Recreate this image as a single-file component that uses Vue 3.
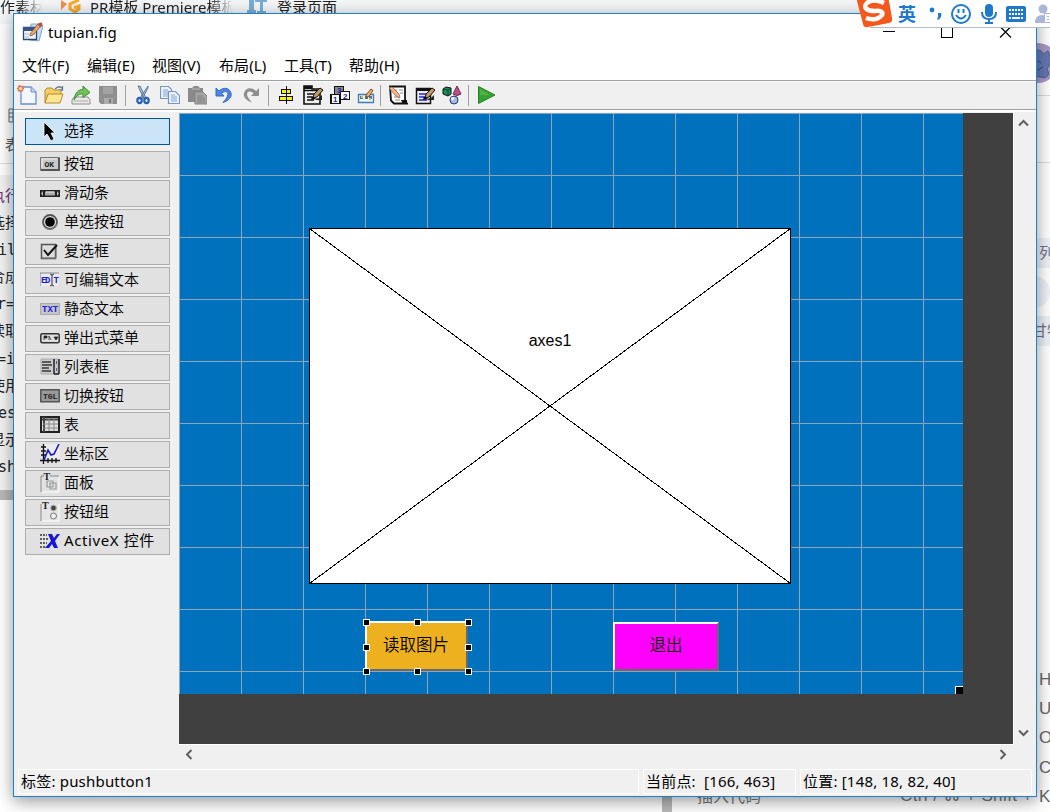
<script setup>
  import { ref } from 'vue';

  const menus = ['文件(F)', '编辑(E)', '视图(V)', '布局(L)', '工具(T)', '帮助(H)'];

  const selected = ref('select');

  const pencil = '<path d="M10 13l1-4 6-6 3 2-6 7z" fill="#c39a66" stroke="#111"/><path d="M8 15l1-4 4 3z" fill="#111"/><path d="M12 14l4-1 3-3v5h-6z" fill="#222"/>';

  const toolbar = [
    [
      { name: 'new', art: '<path d="M4 2h10l5 5v12H4z" fill="#f3f8ff" stroke="#6f8fc4" stroke-width="1.300"/><path d="M14 2v5h5" fill="#c3d6f2" stroke="#6f8fc4"/><path d="M3 0v7M0 3.500h7M1 1l5 5M6 1L1 6" stroke="#e0704a" stroke-width="1.500"/><circle cx="3.500" cy="3.500" r="1.600" fill="#ffe08a"/>' },
      { name: 'open', art: '<path d="M11 4q4-4 7-1M18.500 1v4h-4" fill="none" stroke="#5c7699" stroke-width="1.300"/><path d="M1 18V5l2-2h5l2 2h7v5" fill="#f3cf6b" stroke="#b98a2b"/><path d="M1 18l3-9h15l-3 9z" fill="#ffe694" stroke="#b98a2b"/>' },
      { name: 'import', art: '<path d="M3 12h14l2 3v4H1v-4z" fill="#e9e9e9" stroke="#8e8e8e"/><path d="M3 16h14" stroke="#aaa"/><path d="M3 15C4 7 8 4.500 12 4.500V1l7 6.500-7 5V9c-4 0-6 1-9 6z" fill="#71c356" stroke="#3d8d35"/>' },
      { name: 'save', art: '<path d="M1 1h18v18H3l-2-2z" fill="#8f8f8f"/><path d="M5 2h10v7H5z" fill="#a3a3a3"/><path d="M6 13h9v6H6z" fill="#ababab"/><path d="M11 14h2v4h-2z" fill="#777"/>' }
    ],
    [
      { name: 'cut', art: '<path d="M5 1l2 0 6 12-2 1zM15 1l0 2-6 11-2-1z" fill="#aebdd0" stroke="#52729b" stroke-width=".9"/><g fill="none" stroke="#2460b4" stroke-width="2.200"><ellipse cx="6.500" cy="15.500" rx="2.200" ry="2.700"/><ellipse cx="13.500" cy="15.500" rx="2.200" ry="2.700"/></g>' },
      { name: 'copy', art: '<g fill="#edf4ff" stroke="#7695c7" stroke-width="1.200"><path d="M.5 1.500h8l3 3v9h-11z"/><path d="M8.500 6.500h7l4 4v8h-11z"/></g><path d="M3 5h5M3 7h5M3 9h5M3 11h5M11 10h4M11 12h6M11 14h6M11 16h6" stroke="#7ea2d4"/>' },
      { name: 'paste', art: '<path d="M1 3h4l2-2h4l2 2h3v14H1z" fill="#8a8a8a"/><path d="M5 4h8" stroke="#bbb"/><path d="M8 7h8l4 4v8H8z" fill="#a6a6a6" stroke="#858585"/><path d="M10 11h6M10 13h8M10 15h8M10 17h8" stroke="#808080"/>' },
      { name: 'undo', art: '<path d="M2 3v8h8L7.500 8.200C12 5 15 7 13.500 11c-.8 2.500-2.500 4-4.500 6.500C15 15.500 18 12 17 8 15.500 3 10 1.500 4.800 6z" fill="#4c86e2" stroke="#3468c8" stroke-width="1"/>' },
      { name: 'redo', art: '<path d="M18 3v8h-8l2.500-2.800C8 5 5 7 6.500 11c.8 2.500 2.500 4 4.500 6.500C5 15.500 2 12 3 8 4.500 3 10 1.500 15.200 6z" fill="#8f8f8f"/>' }
    ],
    [
      { name: 'align', art: '<g shape-rendering="crispEdges"><path d="M10 1h1v18h-1z" fill="#111"/><path d="M5.500 4.500h9v4h-9zM3.500 11.500h13v4h-13z" fill="#ffef00" stroke="#111" stroke-width="1.200"/><path d="M10 4v5h1V4zM10 11v5h1v-5z" fill="#111"/></g>' },
      { name: 'menu-editor', art: '<path d="M1 1h8v3h8v15H1z" fill="#eee" stroke="#111" stroke-width="1.600"/><path d="M1 1h8v3H1z" fill="#111"/><path d="M1 5.500h16M4 9h7M4 12h5M4 15h7" stroke="#111" stroke-width="1.700"/>' + pencil },
      { name: 'tab-order', art: '<g stroke="#111" stroke-width="1.400" shape-rendering="crispEdges"><path d="M4.500 1.500h9v9h-9z" fill="#888"/><path d="M10.500 6.500h9v8h-9z" fill="#fff"/><path d="M1 9.500h9v9H1z" fill="#fff"/></g><g font-family="Liberation Sans" font-size="8" font-weight="700" fill="#1919ad"><text x="3" y="17">1</text><text x="13" y="13.500">2</text><text x="7" y="8">3</text></g>' },
      { name: 'toolbar-editor', art: '<path d="M1.500 9.500h15v8h-15z" fill="#e8f3fc" stroke="#447bb4" stroke-width="1.300"/><path d="M3 11h3v3H3zM8 11h3v3H8zM12 11h3v3h-3z" fill="#477b9e"/><path d="M4 11h2v2H4zM12 13h2v2h-2z" fill="#e9bf32"/><path d="M9 10l5-6 2 1.500-4 6-3 .7z" fill="#f4ad61" stroke="#754026" stroke-width=".9"/>' }
    ],
    [
      { name: 'm-file', art: '<path d="M2 1.500h15v15l2 2H6l-3-3z" fill="#fff" stroke="#111" stroke-width="1.800"/><path d="M13 15h6v4h-4z" fill="#111"/><path d="M6 5h3M11 5h4M12 8h3M6 12h5M7 15h5" stroke="#888"/><path d="M1 3l3-1 7 7 1 4-4-2z" fill="#efb98b" stroke="#a0603f" stroke-width=".8"/>' },
      { name: 'inspector', art: '<path d="M1.500 3.500h14v15h-14z" fill="#eee" stroke="#111" stroke-width="1.500"/><path d="M1 3h15v3H1z" fill="#111"/><path d="M4 9h7M4 12h5M4 15h8" stroke="#2323ed" stroke-width="1.600"/>' + pencil },
      { name: 'browser', art: '<path d="M1 4l3-2 5 1v6l-3 2-5-2z" fill="#15945a" stroke="#111"/><path d="M1 4l5 1 3-2M6 5v6" stroke="#063f22" fill="none"/><path d="M15 1l4 8q-4 3-8 0z" fill="#c04d87" stroke="#683050"/><circle cx="12" cy="15" r="4" fill="#a8b9ec" stroke="#273768"/><circle cx="10.500" cy="13.500" r="1.500" fill="#fff"/>' }
    ],
    [
      { name: 'run', art: '<path d="M2.500 1.500v17L19 10z" fill="#34a331" stroke="#238425"/><path d="M4 4v6h10z" fill="#65bd59" opacity=".6"/>' }
    ]
  ];

  const palette = [
    { id: 'select', label: '选择', art: '<path d="M4 1l11 11h-4l3 6-3 2-4-7-3 3z" fill="#000" stroke="#fff" stroke-width=".8"/>' },
    { id: 'push', label: '按钮', art: '<path d="M.5 3.500h19v13H.5z" fill="#c9c9c9" stroke="#777"/><path d="M1 16h18V4" fill="none" stroke="#555" stroke-width="2"/><path d="M2 14V5h15" fill="none" stroke="#eee"/><text x="4.500" y="12.800" class="tiny" font-size="8">OK</text>' },
    { id: 'slider', label: '滑动条', art: '<path d="M0 7h20v7H0z" fill="#222"/><path d="M5 8.500h10v4H5z" fill="#aaa"/><path d="M6 9h8" stroke="#eee"/><path d="M3 8v5L1 10.500zM17 8v5l2-2.500z" fill="#bbb"/>' },
    { id: 'radio', label: '单选按钮', art: '<circle cx="10" cy="10" r="7" fill="#ddd" stroke="#555" stroke-width="1.800"/><circle cx="10" cy="10" r="4.800"/><path d="M5 16q7 4 12-4" fill="none" stroke="#888"/>' },
    { id: 'check', label: '复选框', art: '<path d="M1.500 3.500h14v14h-14z" fill="#ddd" stroke="#555" stroke-width="1.500"/><path d="M2 17h14V5" fill="none" stroke="#777"/><path d="M4 9l4 5 9-10" fill="none" stroke="#111" stroke-width="2"/>' },
    { id: 'edit', label: '可编辑文本', art: '<path d="M1 3h18v13H1z" fill="#eaeaea"/><path d="M0 16V3h19" fill="none" stroke="#888"/><text x="1" y="13" class="tiny tiny-blue" font-size="9" textLength="9.500">ED</text><text x="13.500" y="13" class="tiny tiny-blue" font-size="9">T</text><path d="M10 4l2 1 2-1M12 5v10M10 16l2-1 2 1" fill="none" stroke="#333"/>' },
    { id: 'text', label: '静态文本', art: '<path d="M.5 4.500h19v11H.5z" fill="#c5c5c5" stroke="#aaa"/><text x="2" y="13" class="tiny tiny-blue" font-size="9">TXT</text>' },
    { id: 'popup', label: '弹出式菜单', art: '<rect x=".8" y="5.800" width="18.400" height="9" rx="1.500" fill="#ddd" stroke="#333" stroke-width="1.500"/><path d="M4 12V8h3v2H4M9 8v4M9 8l2 4M14 9h4l-2 3z" fill="#111" stroke="#333" stroke-width=".8"/>' },
    { id: 'list', label: '列表框', art: '<path d="M1 2h17v15H1z" fill="#ccc" stroke="#aaa"/><path d="M2 5h9M2 8h10M2 11h7M2 14h9" stroke="#333" stroke-width="1.600"/><path d="M14 2v15M19 2v15M14 17h5" stroke="#222" stroke-width="1.500"/><path d="M16.500 4v10" stroke="#5656bd" stroke-dasharray="3 4"/>' },
    { id: 'toggle', label: '切换按钮', art: '<path d="M.8 3.800h18.400v12H.8z" fill="#999" stroke="#555" stroke-width="1.500"/><text x="3" y="12.800" class="tiny" font-size="8">TGL</text>' },
    { id: 'table', label: '表', art: '<path d="M1 2h18v15H1z" fill="#ddd" stroke="#222" stroke-width="2"/><path d="M2 4.500h16M4 2v15" stroke="#444" stroke-width="2"/><path d="M9 3v13M14 3v13M3 9h15M3 13h15" stroke="#888"/>' },
    { id: 'axes', label: '坐标区', art: '<path d="M4 0h16v16H4z" fill="#ececec"/><path d="M3.500 0v20M0 16.500h20M1 3h5M1 7h5M1 11h5M8 14v5M12 14v5M16 14v5" stroke="#111" stroke-width="1.300"/><path d="M4 16L8 6l3 5 3-1 5-10" fill="none" stroke="#1717d0" stroke-width="1.600"/>' },
    { id: 'panel', label: '面板', art: '<path d="M1 3h18v16H1z" fill="#e2e2e2"/><path d="M1 19V3h3M10 3h9" fill="none" stroke="#888"/><path d="M19 4v15H2" fill="none" stroke="#fff"/><path d="M7 8h6v6H7zM10 10h6v6h-6z" fill="none" stroke="#999" stroke-width="1.200"/><text x="3.500" y="7" class="tiny tiny-serif" font-size="10">T</text>' },
    { id: 'group', label: '按钮组', art: '<path d="M1 2h18v17H1z" fill="#e4e4e4"/><path d="M1 19V2" stroke="#888"/><path d="M19 2v17H2" fill="none" stroke="#fff"/><circle cx="13.500" cy="6" r="2.800" fill="#444" stroke="#aaa"/><circle cx="13.500" cy="14" r="3" fill="#eee" stroke="#777"/><text x="2" y="7" class="tiny tiny-serif" font-size="10">T</text>' },
    { id: 'activex', label: 'ActiveX 控件', art: '<path d="M0 4h7M0 8h8M0 12h7M0 16h6" stroke="#333" stroke-width="1.400" stroke-dasharray="2 1"/><path d="M8 3h4l2 4 3-4h3l-5 7 3 7h-4l-2-4-3 4H5l6-7z" fill="#1515d8"/>' }
  ];

  const codeLines = [
    { text: '执行', shift: -10, color: '#6b2a78' },
    { text: '选择', shift: -10 },
    { text: 'il', shift: -2 },
    { text: '合成', shift: -10, color: '#333' },
    { text: 'r=', shift: -3 },
    { text: '读取', shift: -10 },
    { text: '=i', shift: -3 },
    { text: '使用', shift: -10 },
    { text: 'es', shift: -2 },
    { text: '显示', shift: -10 },
    { text: 'sh', shift: -2 }
  ];

  const shortcuts = ['H', 'U', 'O', 'C', 'K'];

  const handles = ['nw', 'n', 'ne', 'w', 'e', 'sw', 's', 'se'];
</script>

<template>
  <div class="desktop">
    <div class="bookmarks">
      <span class="bookmarks__item bookmarks__item--first fade">作素材</span>
      <svg class="bookmarks__logo" width="20" height="15" viewBox="0 0 20 15"><path d="M0 0l6 4-6 6z" fill="#f68d47" /><path d="M18 0L9 4v5l5 3 4-3V6l-5 2" fill="none" stroke="#f7a928" stroke-width="3" /></svg>
      <span class="bookmarks__item bookmarks__item--pr fade">PR模板 Premiere模板</span>
      <svg class="bookmarks__it" width="21" height="14" viewBox="0 0 21 14"><path d="M2 0v10H0v3h9v-3H7V0M8 0v2h5v9h-3v2h9v-2h-3V2h4V0" fill="#79aed4" /></svg>
      <span class="bookmarks__item">登录页面</span>
    </div>

    <div class="editor-edge">
      <div class="editor-edge__top">
        <svg width="14" height="15" viewBox="0 0 14 15"><path d="M9 1h12v13H9zM9 5h8M9 9h8M13 1v13" fill="none" stroke="#666" /></svg>
        <span>表</span>
      </div>
      <div class="editor-edge__code">
        <span v-for="line in codeLines" :key="line.text" :style="{ marginLeft: line.shift + 'px', color: line.color }">{{ line.text }}</span>
      </div>
      <div class="editor-edge__bar"></div>
    </div>

    <div class="page-edge">
      <div class="page-edge__avatar">
        <svg width="30" height="40" viewBox="0 0 30 40"><circle cx="2" cy="20" r="20" fill="#aa9bc7" /><path d="M-2 9q6-5 9 2l5-3q6 10-1 18 4 6-2 9l-10-2z" fill="#6578b4" stroke="#4a5588" stroke-width=".8" /><path d="M2 18l3 2M7 24l-5 3" stroke="#3c4575" /></svg>
      </div>
      <div class="page-edge__row"></div>
      <div class="page-edge__tags">
        <span>列表</span>
        <i></i>
        <span class="page-edge__gantt">甘特</span>
      </div>
      <div class="page-edge__keys">
        <span v-for="key in shortcuts" :key="key">{{ key }}</span>
      </div>
    </div>

    <div class="page-foot">
      <div class="page-foot__bar"></div>
      <span class="page-foot__label">插入代码</span>
      <span class="page-foot__keys">Ctrl / ⌘ + Shift +</span>
    </div>

    <div class="window">
      <div class="title">
        <svg width="22" height="22" viewBox="0 0 22 22">
          <path d="M9 2l10 0 2 2-4 15-9-1z" fill="#c9ddf2" stroke="#86a7cb" />
          <path d="M1.500 5.500h13v12h-13z" fill="#f1f5fb" stroke="#27466f" stroke-width="1.300" />
          <path d="M1 5h14v4H1z" fill="#38547e" />
          <path d="M3 12h4M3 15h4M9 12h4" stroke="#b9c9df" stroke-width="1.500" />
          <path d="M8 12l7-9 3-1 1 2-8 9-3 1z" fill="#e5a76a" stroke="#7f4b31" stroke-width=".7" />
          <path d="M17 1l3-.5.5 3-2 2-3-3z" fill="#b84e3c" />
        </svg>
        <span class="title__text">tupian.fig</span>
        <svg class="title__controls" width="130" height="14" viewBox="0 0 130 14" fill="none" stroke="#000">
          <path d="M0 5.500h12M58.500 0.500h11v11h-11z" shape-rendering="crispEdges" />
          <path d="M117 .5l11 11M128 .5l-11 11" stroke-width="1.200" />
        </svg>
      </div>

      <div class="menu">
        <span v-for="item in menus" :key="item">{{ item }}</span>
      </div>

      <div class="toolbar">
        <div v-for="(group, i) in toolbar" :key="i" class="toolbar__group">
          <div v-for="tool in group" :key="tool.name" class="toolbar__tool">
            <svg width="20" height="20" viewBox="0 0 20 20" fill="none" v-html="tool.art"></svg>
          </div>
        </div>
      </div>

      <div class="body">
        <div class="palette">
          <div
            v-for="item in palette"
            :key="item.id"
            class="palette__item"
            :class="{ 'palette__item--selected': selected === item.id, 'palette__item--wide': item.id === 'activex' }"
            @click="selected = item.id"
          >
            <svg width="20" height="20" viewBox="0 0 20 20" v-html="item.art"></svg>
            <span>{{ item.label }}</span>
          </div>
        </div>

        <div class="view">
          <div class="view__main">
            <div class="stage">
              <div class="figure">
                <div class="axes">
                  <svg width="482" height="356" viewBox="0 0 482 356" shape-rendering="crispEdges">
                    <path d="M.5.5h481v355H.5zM.5.5l481 355M481.500.5L.5 355.500" fill="#fff" stroke="#000" />
                  </svg>
                  <span>axes1</span>
                </div>
                <div class="control control--read">
                  读取图片
                  <i v-for="h in handles" :key="h" class="handle" :class="'handle--' + h"></i>
                </div>
                <div class="control control--exit">退出</div>
                <div class="figure__grip"></div>
              </div>
            </div>
            <div class="scroll scroll--y">
              <svg width="11" height="8" viewBox="0 0 11 8"><path d="M1 6.500l4.500-4.500L10 6.500" /></svg>
              <svg width="11" height="8" viewBox="0 0 11 8"><path d="M1 1.500L5.500 6 10 1.500" /></svg>
            </div>
          </div>
          <div class="scroll scroll--x">
            <svg width="8" height="11" viewBox="0 0 8 11"><path d="M6.500 1L2 5.500 6.500 10" /></svg>
            <svg width="8" height="11" viewBox="0 0 8 11"><path d="M1.500 1L6 5.500 1.500 10" /></svg>
          </div>
        </div>
      </div>

      <div class="status">
        <div class="status__cell status__cell--tag">标签: pushbutton1</div>
        <div class="status__cell status__cell--point">当前点:&nbsp; [166, 463]</div>
        <div class="status__cell status__cell--position">位置: [148, 18, 82, 40]</div>
      </div>
    </div>

    <div class="ime">
      <svg class="ime__logo" width="38" height="30" viewBox="0 0 38 30">
        <path d="M1 2Q1-2 5-2h23q4 0 5 4l3 17q1 4-3 5L12 28q-4 1-5-3z" fill="#f4581c" />
        <path d="M28 4Q17-1 11 4c-5 5 1 8 8 8 7-1 9 2 6 5-3 4-10 4-15 2" fill="none" stroke="#fff" stroke-width="4.500" />
      </svg>
      <span class="ime__lang">英</span>
      <svg class="ime__punct" width="14" height="16" viewBox="0 0 14 16"><circle cx="3" cy="4" r="2.400" fill="#1f78ca" /><path d="M9 7h3q1.500 4-3 7l-1-1q2-2 1-4z" fill="#1f78ca" /></svg>
      <svg class="ime__smile" width="20" height="20" viewBox="0 0 20 20" fill="none" stroke="#1f78ca" stroke-width="2"><circle cx="10" cy="10" r="9" /><path d="M7.500 5v4M12.500 5v4M5 11q5 7 10 0" /></svg>
      <svg class="ime__mic" width="16" height="20" viewBox="0 0 16 20" fill="none" stroke="#1f78ca" stroke-width="2"><rect x="5" y="1" width="6" height="11" rx="3" fill="#1f78ca" /><path d="M1 8q0 7 7 7t7-7M8 15v4M4 19h8" /></svg>
      <svg class="ime__keyboard" width="20" height="16" viewBox="0 0 20 16"><rect width="20" height="16" rx="2" fill="#1f78ca" /><path d="M3 4h14M3 8h14" stroke="#fff" stroke-width="2" stroke-dasharray="2 1" /><path d="M3 12h2M6 12h8M15 12h2" stroke="#fff" stroke-width="2" /></svg>
      <svg class="ime__user" width="18" height="20" viewBox="0 0 18 20"><circle cx="8" cy="5" r="4.500" fill="#aab8d5" /><path d="M0 19q0-8 7-8 3 0 4 2v6z" fill="#aab8d5" /><path d="M9.500 9.500h10v9h-10z" fill="#fff" stroke="#aab8d5" /><path d="M13 12v1M13 15v1" stroke="#8fa0c0" stroke-width="1.500" /></svg>
    </div>
  </div>
</template>

<style>
  body {
    margin: 0;
    overflow: hidden;
  }

  .tiny {
    font-family: "Liberation Mono", monospace;
    font-weight: 700;
    fill: #222;
  }

  .tiny-blue {
    fill: #2020df;
  }

  .tiny-serif {
    font-family: "Liberation Serif", serif;
  }
</style>

<style scoped>
  .desktop {
    position: relative;
    width: 1050px;
    height: 812px;
    font-family: "Noto Sans", "Noto Sans CJK SC", sans-serif;
    font-size: 15px;
    color: #000;
    background: #fff;
    overflow: hidden;
  }

  .desktop * {
    box-sizing: border-box;
  }

  svg {
    display: block;
    flex-shrink: 0;
  }

  .bookmarks {
    display: flex;
    align-items: flex-start;
    height: 24px;
    white-space: nowrap;
    line-height: 14px;
    color: #222;
    background: #f5f6f7;
  }

  .bookmarks__item--first {
    width: 43px;
    overflow: hidden;
  }

  .bookmarks__logo {
    margin: 0 9px 0 18px;
  }

  .bookmarks__item--pr {
    width: 143px;
    overflow: hidden;
  }

  .bookmarks__it {
    margin: 0 9px 0 14px;
  }

  .fade {
    mask-image: linear-gradient(to left, transparent, #000 24px);
  }

  .editor-edge {
    position: absolute;
    top: 24px;
    left: 0;
    display: flex;
    flex-direction: column;
    width: 30px;
    height: 788px;
    overflow: hidden;
  }

  .editor-edge__top {
    display: flex;
    flex-direction: column;
    gap: 10px;
    height: 140px;
    padding-top: 84px;
    border-bottom: 1px solid #ddd;
    color: #555;
  }

  .editor-edge__top span {
    padding-left: 5px;
  }

  .editor-edge__code {
    display: flex;
    flex-direction: column;
    height: 326px;
    padding-top: 19px;
    font-family: "DejaVu Sans Mono", "Noto Sans CJK SC", monospace;
    line-height: 27.1px;
    white-space: nowrap;
    color: #222;
    background: linear-gradient(#fff 11px, #f3f3f3 11px);
  }

  .editor-edge__bar {
    height: 10px;
    background: #b9b9b9;
  }

  .page-edge {
    position: absolute;
    top: 24px;
    right: 0;
    display: flex;
    flex-direction: column;
    width: 14px;
    height: 788px;
    overflow: hidden;
    color: #666;
    background: #fff;
  }

  .page-edge__avatar {
    height: 72px;
    padding-top: 19px;
    border-bottom: 1px solid #ddd;
  }

  .page-edge__row {
    height: 67px;
    border-bottom: 1px solid #ddd;
  }

  .page-edge__tags {
    display: flex;
    flex-direction: column;
    gap: 8px;
    height: 502px;
    padding-top: 75px;
    white-space: nowrap;
  }

  .page-edge__tags span {
    height: 30px;
    padding-left: 3px;
    line-height: 28px;
    color: #70718b;
    background: #edf1f8;
  }

  .page-edge__tags .page-edge__gantt {
    padding-left: 0;
    text-indent: -4px;
  }

  .page-edge__tags i {
    flex-shrink: 0;
    width: 32px;
    height: 32px;
    margin-left: -18px;
    border-radius: 50%;
    background: #edf1f8;
  }

  .page-edge__keys {
    display: flex;
    flex-direction: column;
    padding-left: 3px;
    font-family: "Liberation Sans", sans-serif;
    font-size: 17px;
    line-height: 29.2px;
  }

  .page-foot {
    position: absolute;
    top: 784px;
    left: 662px;
    display: flex;
    width: 388px;
    height: 28px;
    line-height: 24px;
    color: #777;
  }

  .page-foot__bar {
    width: 10px;
    background: #b9b9b9;
  }

  .page-foot__label {
    width: 203px;
    margin-left: 25px;
    font-size: 16px;
  }

  .page-foot__keys {
    font-family: "Liberation Sans", "DejaVu Sans", sans-serif;
    font-size: 17px;
    letter-spacing: 0.4px;
    white-space: nowrap;
  }

  .window {
    position: absolute;
    top: 13px;
    left: 13px;
    display: flex;
    flex-direction: column;
    width: 1024px;
    height: 784px;
    border: 1px solid #1f80cc;
    background: #f0f0f0;
    box-shadow: 0 4px 16px rgba(0, 0, 0, 0.42);
  }

  .title {
    display: flex;
    align-items: center;
    height: 37px;
    padding-left: 8px;
    background: #fff;
  }

  .title__text {
    margin-left: 4px;
    padding-bottom: 2px;
    letter-spacing: 0.1px;
  }

  .title__controls {
    margin: 0 23px 0 auto;
  }

  .menu {
    display: flex;
    gap: 17px;
    height: 30px;
    padding-left: 8px;
    line-height: 29px;
    letter-spacing: 0.1px;
    white-space: nowrap;
    background: #fff;
    border-bottom: 1px solid #a0a0a0;
  }

  .menu span {
    flex: 0 0 48px;
  }

  .menu span:nth-child(3) {
    flex-basis: 50px;
  }

  .toolbar {
    display: flex;
    height: 29px;
    border-top: 1px solid #fff;
    border-bottom: 1px solid #a0a0a0;
  }

  .toolbar__group {
    display: flex;
    align-items: center;
    padding-right: 3px;
  }

  .toolbar__group + .toolbar__group {
    position: relative;
    padding-left: 4px;
  }

  .toolbar__group + .toolbar__group::before {
    content: "";
    position: absolute;
    top: 3px;
    bottom: 3px;
    left: 0;
    border-left: 1px solid #a0a0a0;
  }

  .toolbar__group:nth-child(2) {
    padding-right: 4px;
  }

  .toolbar__group:nth-child(3) {
    padding-right: 0;
  }

  .toolbar__tool {
    display: flex;
    justify-content: center;
    width: 27px;
    padding-bottom: 2px;
  }

  .toolbar__group:first-child .toolbar__tool {
    padding-right: 2px;
  }

  .body {
    display: flex;
    flex: 1;
    border-top: 2px solid #fff;
  }

  .palette {
    display: flex;
    flex-direction: column;
    gap: 2px;
    width: 165px;
    padding: 6px 9px 0 11px;
    font-weight: 350;
  }

  .palette__item {
    display: flex;
    align-items: center;
    gap: 4px;
    height: 27px;
    padding: 0 0 2px 14px;
    line-height: 23px;
    white-space: nowrap;
    border: 1px solid #adadad;
    background: #e1e1e1;
  }

  .palette__item--selected {
    margin-bottom: 4px;
    border-color: #005499;
    background: #cce4f7;
  }

  .palette__item--wide {
    font-weight: 400;
    letter-spacing: 0.6px;
  }

  .view {
    display: flex;
    flex-direction: column;
    width: 857px;
    padding-top: 1px;
  }

  .view__main {
    display: flex;
    height: 631px;
  }

  .stage {
    width: 834px;
    background: #404040;
  }

  .figure {
    position: relative;
    width: 784px;
    height: 581px;
    background-color: #0072bd;
    background-image: linear-gradient(to right, #8da5b8 1px, transparent 1px), linear-gradient(#8da5b8 1px, transparent 1px);
    background-size: 62px 62px;
  }

  .axes {
    position: absolute;
    top: 115px;
    left: 130px;
  }

  .axes span {
    position: absolute;
    top: 104px;
    left: 0;
    width: 482px;
    font-family: "Liberation Sans", sans-serif;
    font-size: 16px;
    line-height: 18px;
    text-align: center;
  }

  .control {
    position: absolute;
    font-size: 16.5px;
    font-weight: 350;
    line-height: 43px;
    text-align: center;
    border-style: solid;
    border-width: 2px;
    border-color: #fff #696969 #696969 #fff;
  }

  .control--read {
    top: 508px;
    left: 186px;
    width: 103px;
    height: 50px;
    padding-right: 1px;
    background: #edb120;
  }

  .control--exit {
    top: 509px;
    left: 434px;
    width: 106px;
    height: 49px;
    line-height: 42px;
    background: #f0f;
  }

  .handle {
    position: absolute;
    width: 7px;
    height: 7px;
    border: 1px solid #fff;
    background: #000;
  }

  .handle--nw,
  .handle--n,
  .handle--ne {
    top: -4px;
  }

  .handle--w,
  .handle--e {
    top: 21px;
  }

  .handle--sw,
  .handle--s,
  .handle--se {
    top: 45px;
  }

  .handle--nw,
  .handle--w,
  .handle--sw {
    left: -4px;
  }

  .handle--n,
  .handle--s {
    left: 47px;
  }

  .handle--ne,
  .handle--e,
  .handle--se {
    left: 98px;
  }

  .figure__grip {
    position: absolute;
    right: 0;
    bottom: 0;
    width: 8px;
    height: 8px;
    border-top: 1px solid #fff;
    border-left: 1px solid #fff;
    background: #000;
  }

  .scroll {
    display: flex;
    justify-content: space-between;
  }

  .scroll path {
    fill: none;
    stroke: #606060;
    stroke-width: 2;
  }

  .scroll--y {
    flex-direction: column;
    padding: 6px 6px 7px 4px;
    border-left: 1px solid #fff;
  }

  .scroll--x {
    width: 834px;
    padding: 4px 6px 0 6px;
    border-top: 1px solid #fff;
  }

  .status {
    display: flex;
    gap: 4px;
    height: 27px;
    padding: 0 0 2px 4px;
  }

  .status__cell {
    padding-left: 2px;
    line-height: 23px;
    letter-spacing: 0.2px;
    white-space: pre;
    border: 1px solid #fff;
  }

  .status__cell--tag {
    width: 621px;
  }

  .status__cell--point {
    width: 153px;
  }

  .status__cell--position {
    width: 232px;
  }

  .ime {
    position: absolute;
    top: 0;
    left: 856px;
    display: flex;
    align-items: center;
    width: 194px;
    height: 28px;
  }

  .ime::before {
    content: "";
    position: absolute;
    top: 0;
    right: 0;
    left: 14px;
    height: 27px;
    background: #fff;
    border-bottom: 1px solid #b4b8c0;
  }

  .ime > * {
    position: relative;
  }

  .ime__lang {
    width: 18px;
    margin-left: 4px;
    font-size: 18px;
    font-weight: 700;
    line-height: 26px;
    color: #1f78ca;
  }

  .ime__punct {
    margin-left: 13px;
  }

  .ime__smile {
    margin-left: 8px;
  }

  .ime__mic {
    margin-left: 10px;
  }

  .ime__keyboard {
    margin-left: 9px;
  }

  .ime__user {
    margin-left: 9px;
  }
</style>
